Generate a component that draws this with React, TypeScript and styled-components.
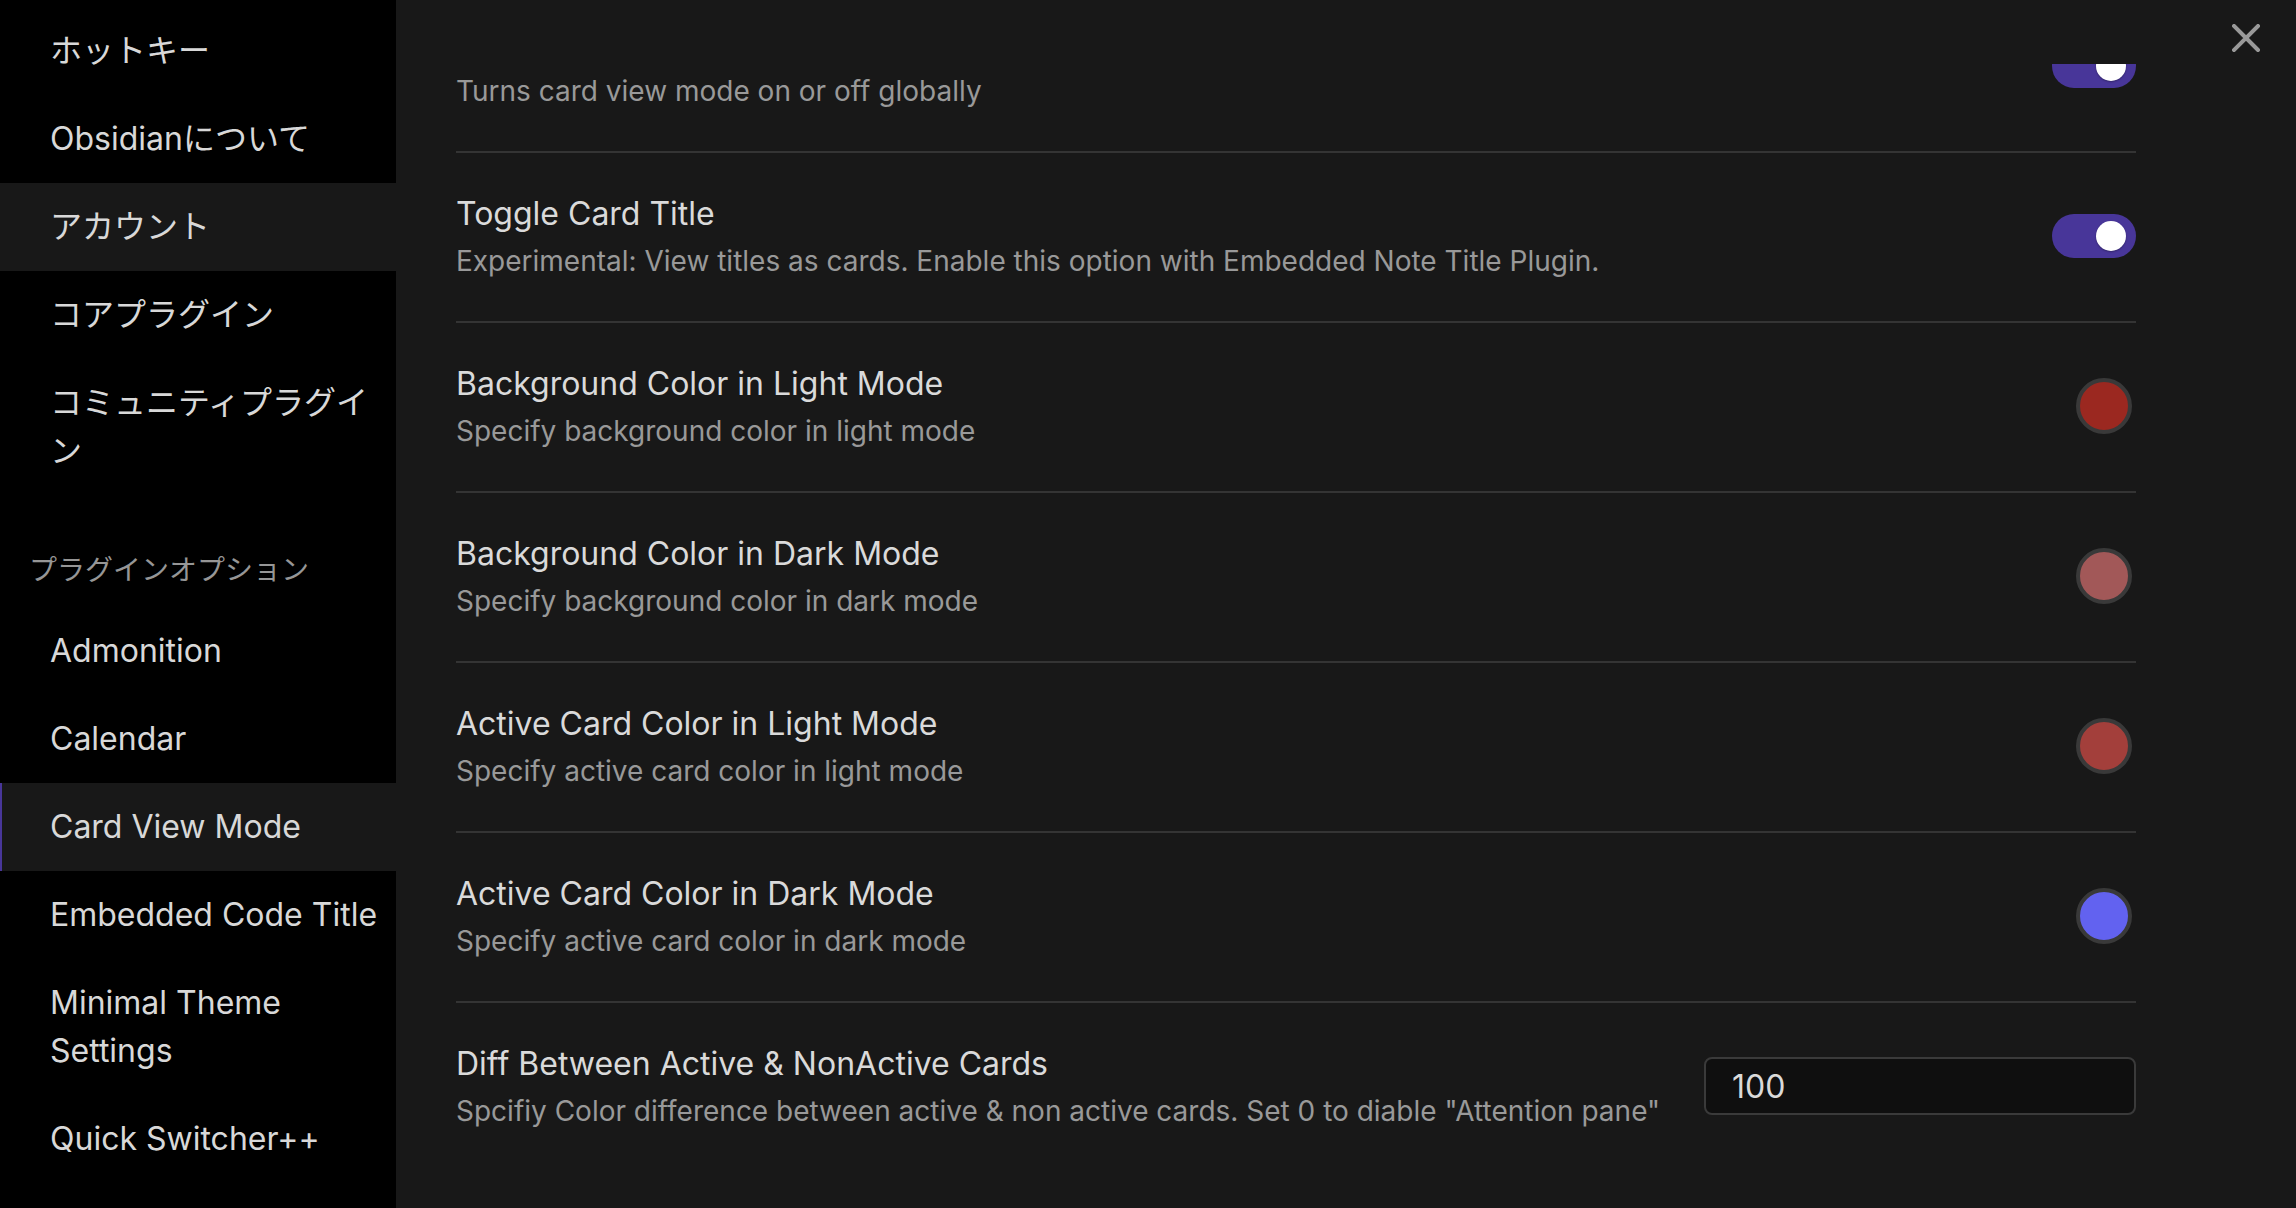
import React, { useLayoutEffect, useRef } from "react";
import styled, { createGlobalStyle } from "styled-components";

const Global = createGlobalStyle`
  html, body { margin: 0; padding: 0; background: #000; overflow: hidden; }
  * { box-sizing: border-box; }
  body { font-family: Inter, "Noto Sans CJK JP", "Noto Sans", sans-serif; -webkit-font-smoothing: antialiased; }
`;

const Shell = styled.div`
  display: flex;
  width: 100vw;
  height: 100vh;
  overflow: hidden;
`;

const Sidebar = styled.nav`
  width: 396px;
  flex: 0 0 396px;
  background: #000;
  padding-top: 7px;
  display: flex;
  flex-direction: column;
  overflow: hidden;
`;

const NavItem = styled.div<{ $active?: boolean; $hover?: boolean }>`
  padding: 20px 8px 20px ${(p) => (p.$active ? 48 : 50)}px;
  font-size: 32px;
  line-height: 48px;
  color: #d8d8d8;
  background: ${(p) => (p.$active || p.$hover ? "#181818" : "transparent")};
  border-left: ${(p) => (p.$active ? "2px solid #483699" : "none")};
`;

const GroupTitle = styled.div`
  padding: 54px 20px 16px 29px;
  font-size: 28px;
  line-height: 42px;
  color: #969696;
`;

const Main = styled.main`
  position: relative;
  flex: 1;
  min-height: 0;
  overflow: hidden;
  background: #181818;
  padding-top: 64px;
  display: flex;
  flex-direction: column;
`;

const CloseButton = styled.div`
  position: absolute;
  top: 24px;
  right: 36px;
  width: 28px;
  height: 28px;
  display: flex;
  align-items: center;
  justify-content: center;
`;

const Scroller = styled.div`
  flex: 1;
  min-height: 0;
  overflow: hidden;
  padding: 0 160px 240px 60px;
`;

const Row = styled.div`
  display: flex;
  align-items: center;
  border-top: 2px solid #343434;
  padding: 37px 0 39px;
  &:first-child { border-top: none; }
`;

const Info = styled.div`
  flex: 1;
  min-width: 0;
`;

const Name = styled.div`
  font-size: 32px;
  line-height: 48px;
  color: #dadada;
`;

const Desc = styled.div`
  margin-top: 2px;
  font-size: 28px;
  line-height: 42px;
  color: #999;
  white-space: nowrap;
`;

const Control = styled.div`
  flex: 0 0 auto;
  margin-left: 40px;
  display: flex;
  align-items: center;
  justify-content: flex-end;
`;

const Toggle = styled.div`
  width: 84px;
  height: 44px;
  border-radius: 22px;
  background: #483699;
  display: flex;
  align-items: center;
  justify-content: flex-end;
  padding: 0 10px;
`;

const Knob = styled.div`
  width: 30px;
  height: 30px;
  border-radius: 50%;
  background: #fff;
  box-shadow: 0 1px 2px rgba(0, 0, 0, 0.3);
`;

const Swatch = styled.div<{ $color: string }>`
  width: 56px;
  height: 56px;
  margin-right: 4px;
  border-radius: 50%;
  border: 4px solid #393939;
  background: ${(p) => p.$color};
`;

const NumberInput = styled.input`
  width: 432px;
  height: 58px;
  border-radius: 8px;
  border: 2px solid #3a3a3a;
  background: #0f0f0f;
  color: #dadada;
  font-family: Inter, "Noto Sans", sans-serif;
  font-size: 32px;
  padding: 0 26px;
  outline: none;
`;

type Setting =
  | { name: string; desc: string; kind: "toggle" }
  | { name: string; desc: string; kind: "color"; color: string }
  | { name: string; desc: string; kind: "input"; value: string };

const settings: Setting[] = [
  { name: "Card View Mode", desc: "Turns card view mode on or off globally", kind: "toggle" },
  {
    name: "Toggle Card Title",
    desc: "Experimental: View titles as cards. Enable this option with Embedded Note Title Plugin.",
    kind: "toggle",
  },
  { name: "Background Color in Light Mode", desc: "Specify background color in light mode", kind: "color", color: "#9b2820" },
  { name: "Background Color in Dark Mode", desc: "Specify background color in dark mode", kind: "color", color: "#a25858" },
  { name: "Active Card Color in Light Mode", desc: "Specify active card color in light mode", kind: "color", color: "#a33f3b" },
  { name: "Active Card Color in Dark Mode", desc: "Specify active card color in dark mode", kind: "color", color: "#6262f0" },
  {
    name: "Diff Between Active & NonActive Cards",
    desc: 'Spcifiy Color difference between active & non active cards. Set 0 to diable "Attention pane"',
    kind: "input",
    value: "100",
  },
];

const topItems = [
  { label: "ホットキー" },
  { label: "Obsidianについて" },
  { label: "アカウント", hover: true },
  { label: "コアプラグイン" },
  { label: "コミュニティプラグイン" },
];

const pluginItems = [
  { label: "Admonition" },
  { label: "Calendar" },
  { label: "Card View Mode", active: true },
  { label: "Embedded Code Title" },
  { label: "Minimal Theme Settings" },
  { label: "Quick Switcher++" },
];

export default function App() {
  const scrollRef = useRef<HTMLDivElement>(null);
  useLayoutEffect(() => {
    if (scrollRef.current) scrollRef.current.scrollTop = 81;
  }, []);

  return (
    <>
      <Global />
      <Shell>
        <Sidebar>
          {topItems.map((it) => (
            <NavItem key={it.label} $hover={it.hover}>
              {it.label}
            </NavItem>
          ))}
          <GroupTitle>プラグインオプション</GroupTitle>
          {pluginItems.map((it) => (
            <NavItem key={it.label} $active={it.active}>
              {it.label}
            </NavItem>
          ))}
        </Sidebar>
        <Main>
          <CloseButton>
            <svg width="28" height="28" viewBox="0 0 28 28">
              <path d="M2 2 L26 26 M26 2 L2 26" stroke="#999" strokeWidth="4" strokeLinecap="square" />
            </svg>
          </CloseButton>
          <Scroller ref={scrollRef}>
            {settings.map((s) => (
              <Row key={s.name}>
                <Info>
                  <Name>{s.name}</Name>
                  <Desc>{s.desc}</Desc>
                </Info>
                <Control>
                  {s.kind === "toggle" && (
                    <Toggle>
                      <Knob />
                    </Toggle>
                  )}
                  {s.kind === "color" && <Swatch $color={s.color} />}
                  {s.kind === "input" && <NumberInput type="text" defaultValue={s.value} readOnly />}
                </Control>
              </Row>
            ))}
          </Scroller>
        </Main>
      </Shell>
    </>
  );
}
